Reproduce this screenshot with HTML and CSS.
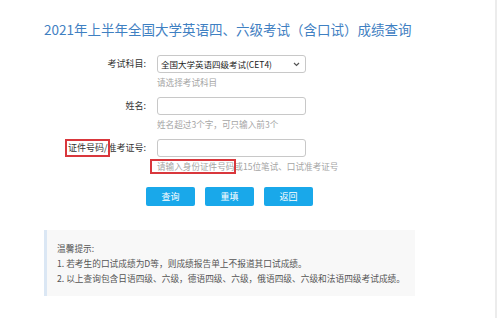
FILE: index.html
```html
<!DOCTYPE html>
<html lang="zh-CN">
<head>
    <meta charset="UTF-8">
    <meta name="viewport" content="width=device-width, initial-scale=1.0">
    <title>成绩查询</title>
    <link rel="stylesheet" href="styles.css">
</head>
<body>
    <div class="wrap">
        <h1 class="title">2021年上半年全国大学英语四、六级考试（含口试）成绩查询</h1>

        <form class="query-form" id="queryForm">
            <div class="row">
                <label class="label" for="subject">考试科目:</label>
                <div class="field">
                    <div class="select-box">
                        <select id="subject">
                            <option value="CET4">全国大学英语四级考试(CET4)</option>
                            <option value="CET6">全国大学英语六级考试(CET6)</option>
                        </select>
                        <svg class="chevron" width="7" height="5" viewBox="0 0 7 5">
                            <path d="M1 1 L3.5 3.5 L6 1" fill="none" stroke="#555" stroke-width="1.2"/>
                        </svg>
                    </div>
                    <div class="hint">请选择考试科目</div>
                </div>
            </div>

            <div class="row">
                <label class="label" for="name">姓名:</label>
                <div class="field">
                    <input type="text" id="name">
                    <div class="hint">姓名超过3个字，可只输入前3个</div>
                </div>
            </div>

            <div class="row">
                <label class="label" for="ksbh"><span class="mark">证件号码/</span>准考证号:</label>
                <div class="field">
                    <input type="text" id="ksbh">
                    <div class="hint"><span class="mark mark-hint">请输入身份证件号码</span>或15位笔试、口试准考证号</div>
                </div>
            </div>

            <div class="actions">
                <button type="submit" class="btn">查询</button>
                <button type="reset" class="btn">重填</button>
                <button type="button" class="btn">返回</button>
            </div>
        </form>

        <div class="tips">
            <p>温馨提示:</p>
            <p>1. 若考生的口试成绩为D等，则成绩报告单上不报道其口试成绩。</p>
            <p>2. 以上查询包含日语四级、六级，德语四级、六级，俄语四级、六级和法语四级考试成绩。</p>
        </div>
    </div>
</body>
</html>
```

FILE: styles.css
```css
html, body {
    margin: 0;
    padding: 0;
}
body {
    font-family: "Noto Sans CJK SC", "Noto Sans", sans-serif;
    font-size: 9px;
    color: #333;
    background: #fff;
    min-height: 100vh;
    border-right: 2px solid #ececec;
}
.wrap {
    width: 371px;
    margin-left: 44px;
    padding-top: 19px;
}
.title {
    margin: 0;
    font-size: 13.5px;
    font-weight: normal;
    line-height: 20px;
    color: #3f80c2;
    white-space: nowrap;
}
.query-form {
    margin-top: 16px;
}
.row {
    display: grid;
    grid-template-columns: 102px 149px;
    column-gap: 11px;
    margin-bottom: 8px;
}
.label {
    text-align: right;
    line-height: 18px;
    height: 18px;
    white-space: nowrap;
}
.field input,
.field select {
    display: block;
    width: 100%;
    height: 18px;
    box-sizing: border-box;
    margin: 0;
    border: 1px solid #c8c8c8;
    border-radius: 3px;
    background: #fff;
    font-family: inherit;
    font-size: 8.5px;
    color: #222;
    outline: none;
}
.select-box {
    position: relative;
}
.field select {
    appearance: none;
    -webkit-appearance: none;
    padding: 0 14px 0 3px;
}
.chevron {
    position: absolute;
    right: 6px;
    top: 7px;
}
.hint {
    margin-top: 2px;
    font-size: 8.6px;
    line-height: 14px;
    color: #a5a5a5;
    white-space: nowrap;
}
.mark {
    position: relative;
}
.mark::after {
    content: "";
    position: absolute;
    left: -3px;
    right: -3px;
    top: -2px;
    bottom: -3px;
    border: 2px solid #d9373c;
}
.mark-hint::after {
    left: -7px;
    right: -2px;
    top: -1px;
    bottom: -2px;
}
.actions {
    display: flex;
    gap: 10px;
    margin-left: 102px;
    margin-top: 14px;
}
.btn {
    width: 49px;
    height: 19px;
    padding: 0;
    border: none;
    border-radius: 2px;
    background: #19a8ea;
    color: #fff;
    font-family: inherit;
    font-size: 9px;
    cursor: pointer;
}
.tips {
    margin-top: 24px;
    padding: 11px 10px 10px 10px;
    background: #f8f8f8;
    border-left: 3px solid #dbe7f4;
    color: #555;
    font-size: 8.7px;
}
.tips p {
    margin: 0;
    line-height: 15px;
    white-space: nowrap;
}
```
